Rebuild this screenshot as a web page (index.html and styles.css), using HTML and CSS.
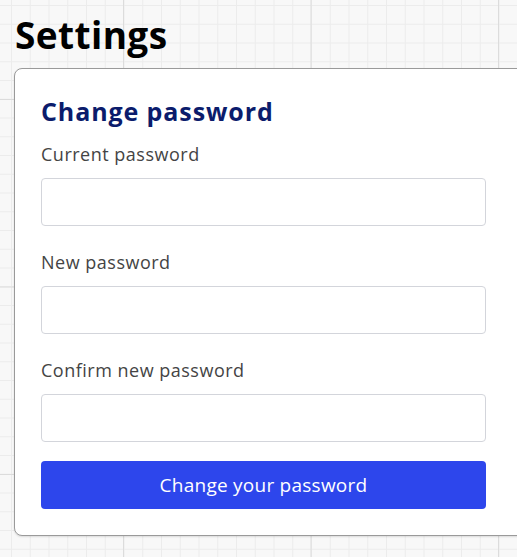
FILE: index.html
```html
<!DOCTYPE html>
<html lang="en">
<head>
<meta charset="utf-8">
<title>Settings</title>
<link rel="stylesheet" href="styles.css">
</head>
<body>
<main class="page">
  <h1 class="page-title">Settings</h1>
  <section class="card">
    <h2 class="card-title">Change password</h2>
    <form class="form">
      <div class="field">
        <label class="field-label" for="current">Current password</label>
        <input class="field-input" id="current" type="password">
      </div>
      <div class="field">
        <label class="field-label" for="new">New password</label>
        <input class="field-input" id="new" type="password">
      </div>
      <div class="field">
        <label class="field-label" for="confirm">Confirm new password</label>
        <input class="field-input" id="confirm" type="password">
      </div>
      <button class="submit" type="button">Change your password</button>
    </form>
  </section>
</main>
</body>
</html>
```
FILE: styles.css
```css
html, body {
  margin: 0;
  padding: 0;
  overflow: hidden;
  height: 100%;
}
body {
  font-family: "Open Sans", "Noto Sans", sans-serif;
  background-color: #f8f8f8;
  background-image:
    linear-gradient(to right, #dcdcdc 1px, transparent 1px),
    linear-gradient(to bottom, #dcdcdc 1px, transparent 1px),
    linear-gradient(to right, #ececec 1px, transparent 1px),
    linear-gradient(to bottom, #ececec 1px, transparent 1px);
  background-size: 187.5px 187.5px, 187.5px 187.5px, 18.75px 18.75px, 18.75px 18.75px;
  background-position: 123px 99px, 123px 99px, 11px 5px, 11px 5px;
}
.page {
  padding: 9px 0 0 14px;
}
.page-title {
  margin: 0 0 7px 1px;
  font-size: 37px;
  letter-spacing: 0.4px;
  line-height: 52px;
  font-weight: 700;
  color: #000;
}
.card {
  width: 540px;
  box-sizing: border-box;
  background: #fff;
  border: 1px solid #9a9a9a;
  border-radius: 8px;
  box-shadow: 0 1px 2px rgba(0,0,0,0.12);
  padding: 26px 26px 26px;
}
.card-title {
  margin: 0 0 15px;
  font-size: 25px;
  letter-spacing: 0.9px;
  line-height: 32px;
  font-weight: 700;
  color: #0b1c6c;
}
.form {
  width: 445px;
  display: flex;
  flex-direction: column;
  gap: 24px;
}
.field {
  display: flex;
  flex-direction: column;
  gap: 12px;
}
.field-label {
  font-size: 18px;
  letter-spacing: 0.5px;
  line-height: 24px;
  color: #444;
}
.field-input {
  height: 48px;
  box-sizing: border-box;
  border: 1px solid #d3d5db;
  border-radius: 4px;
  background: #fff;
  margin: 0;
}
.submit {
  margin-top: -5px;
  height: 48px;
  border: none;
  border-radius: 4px;
  background: #2d46ec;
  color: #fff;
  font-family: inherit;
  font-size: 19px;
  letter-spacing: 0.25px;
}
```
